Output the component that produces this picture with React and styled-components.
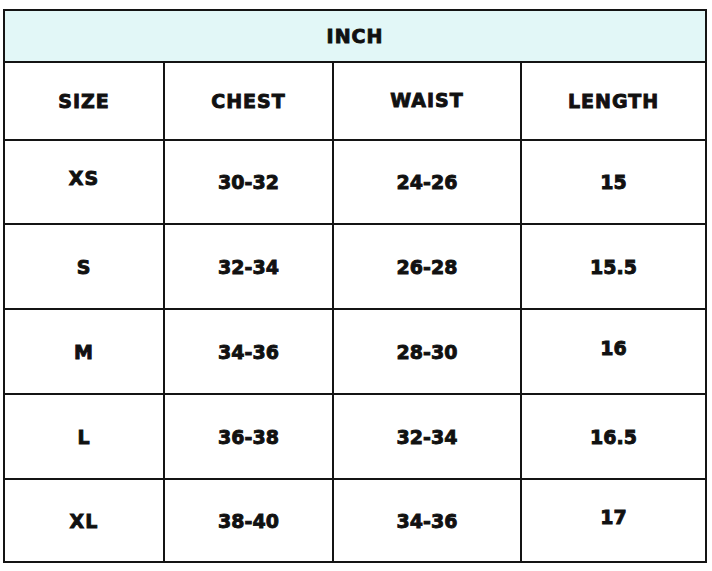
import React from "react";
import styled, { createGlobalStyle } from "styled-components";

const Global = createGlobalStyle`
  html, body { margin: 0; padding: 0; background: #ffffff; }
  body { font-family: "DejaVu Sans", "Liberation Sans", sans-serif; }
`;

const Page = styled.div`
  padding: 9px 5px 0 3px;
  background: #ffffff;
`;

const Chart = styled.div`
  display: grid;
  width: 704px;
  box-sizing: border-box;
  grid-template-columns: 158px 167px 186px 183px;
  grid-template-rows: 50px 76px 82px 83px 83px 83px 81px;
  gap: 2px;
  padding: 2px;
  background: #141414;
`;

const Band = styled.div`
  grid-column: 1 / -1;
  display: flex;
  align-items: center;
  justify-content: center;
  background: #e2f7f7;
  color: #111;
  font-weight: 700;
  font-size: 19px;
  letter-spacing: 1px;
  -webkit-text-stroke: 0.9px #111;
`;

const Cell = styled.div`
  display: flex;
  align-items: center;
  justify-content: center;
  background: #ffffff;
  color: #111;
  font-weight: 700;
  font-size: 19px;
  letter-spacing: ${(p) => (p.$word ? "1px" : "0")};
  -webkit-text-stroke: 0.9px #111;
  padding-bottom: ${(p) => (p.$lift ? p.$lift * 2 : 0)}px;
  box-sizing: border-box;
`;

const headers = ["SIZE", "CHEST", "WAIST", "LENGTH"];
const rows = [
  [["XS", 4], ["30-32", 0], ["24-26", 0], ["15", 0]],
  [["S", 0], ["32-34", 0], ["26-28", 0], ["15.5", 0]],
  [["M", 0], ["34-36", 0], ["28-30", 0], ["16", 4]],
  [["L", 0], ["36-38", 0], ["32-34", 0], ["16.5", 0]],
  [["XL", 0], ["38-40", 0], ["34-36", 0], ["17", 4]],
];

export default function App() {
  return (
    <Page>
      <Global />
      <Chart>
        <Band>INCH</Band>
        {headers.map((h) => (
          <Cell key={h} $word $lift={h === "WAIST" ? 1 : 0}>
            {h}
          </Cell>
        ))}
        {rows.map((r, i) =>
          r.map(([v, lift], j) => (
            <Cell key={`${i}-${j}`} $word={j === 0} $lift={lift}>
              {v}
            </Cell>
          ))
        )}
      </Chart>
    </Page>
  );
}
